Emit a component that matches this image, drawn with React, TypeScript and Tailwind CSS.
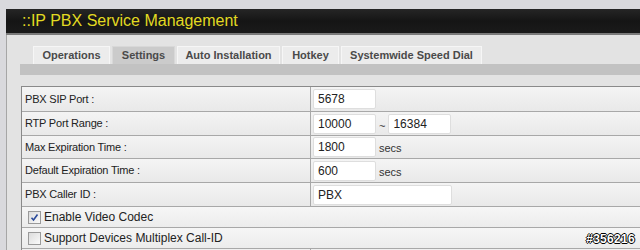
import React from "react"

const tabs = [
  { name: "Operations", w: "w-[77px]" },
  { name: "Settings", w: "w-[63px]", active: true },
  { name: "Auto Installation", w: "w-[103px]" },
  { name: "Hotkey", w: "w-[57px]" },
  { name: "Systemwide Speed Dial", w: "w-[141px]" },
]

function Field({ value, wide }: { value: string; wide?: boolean }) {
  return (
    <div
      className={`h-[20px] ${wide ? "w-[139px]" : "w-[63px]"} bg-white border border-[#dedede] rounded-[2px] px-[4px] flex items-center text-[12px] text-[#222]`}
    >
      {value}
    </div>
  )
}

function Row({ label, h, children }: { label: string; h: string; children: React.ReactNode }) {
  return (
    <div className={`flex ${h} border-b border-[#a8a8a8]`}>
      <div className="w-[289px] shrink-0 border-r border-[#a8a8a8] pl-[3px] flex items-center text-[11px] tracking-[-0.2px] text-[#222] bg-gradient-to-b from-[#f4f4f4] to-[#e9e9e9]">
        {label}
      </div>
      <div className="flex-1 flex items-center pl-[2px] gap-[3px] text-[11px] text-[#333] bg-gradient-to-b from-[#f4f4f4] to-[#e9e9e9]">
        {children}
      </div>
    </div>
  )
}

function CheckRow({ label, checked, h }: { label: string; checked?: boolean; h: string }) {
  return (
    <div className={`flex items-center ${h} border-b border-[#a8a8a8] pl-[6px] gap-[3px] text-[12px] text-[#222] bg-gradient-to-b from-[#f6f6f6] to-[#ececec]`}>
      <div className="w-[13px] h-[13px] border border-[#9a9a9a] bg-gradient-to-br from-[#dcdcdc] to-[#fafafa] flex items-center justify-center">
        {checked && (
          <svg width="9" height="9" viewBox="0 0 9 9">
            <path d="M1.5 4.8 L3.5 7 L7.5 1.5" stroke="#2a4a9a" strokeWidth="1.6" fill="none" />
          </svg>
        )}
      </div>
      <span>{label}</span>
    </div>
  )
}

export default function App() {
  return (
    <div className="w-[640px] h-[250px] overflow-hidden bg-[#d9d9dd] pt-[9px] relative font-['Liberation_Sans',Arial,sans-serif]">
      {/* title bar */}
      <div className="ml-[6px] h-[26px] bg-gradient-to-b from-[#262626] via-[#151515] to-[#1a1a1a] border-b-2 border-[#7a7a7a] flex items-center pl-[16px]">
        <span className="text-[16px] text-[#e2da22] leading-none">::IP PBX Service Management</span>
      </div>

      {/* panel */}
      <div className="ml-[6px] h-[220px] bg-[#e3e3e3] border-l border-[#a6a6a6] pl-[13px]">
        <div className="pt-[11px] pl-[13px] flex gap-[2px]">
          {tabs.map(t => (
            <div
              key={t.name}
              className={`${t.w} h-[18px] flex items-center justify-center text-[11px] font-bold text-[#4a4a4a] border-t border-l border-r ${
                t.active ? "bg-[#cbcbcb] border-[#d8d8d8]" : "bg-[#ececec] border-[#f6f6f6]"
              }`}
            >
              {t.name}
            </div>
          ))}
        </div>
        <div className="h-[11px] bg-[#c2c2c2]" />

        {/* settings table */}
        <div className="mt-[11px] ml-[1px] border-t border-l border-[#8a8a8a]">
          <Row label="PBX SIP Port :" h="h-[25px]">
            <Field value="5678" />
          </Row>
          <Row label="RTP Port Range :" h="h-[24px]">
            <Field value="10000" />
            <span className="text-[11px] leading-none mt-[5px]">~</span>
            <Field value="16384" />
          </Row>
          <Row label="Max Expiration Time :" h="h-[23px]">
            <Field value="1800" />
            <span className="mt-[3px]">secs</span>
          </Row>
          <Row label="Default Expiration Time :" h="h-[24px]">
            <Field value="600" />
            <span className="mt-[3px]">secs</span>
          </Row>
          <Row label="PBX Caller ID :" h="h-[24px]">
            <Field value="PBX" wide />
          </Row>
          <CheckRow label="Enable Video Codec" checked h="h-[21px]" />
          <CheckRow label="Support Devices Multiplex Call-ID" h="h-[21px]" />
          <div className="flex h-[10px]">
            <div className="w-[289px] border-r border-[#a8a8a8] bg-[#efefef]" />
            <div className="flex-1 bg-[#efefef]" />
          </div>
        </div>
      </div>

      {/* watermark */}
      <div className="absolute right-[5px] bottom-[2px] text-[12px] font-bold text-white tracking-[0.3px] [text-shadow:1px_0_0_#000,-1px_0_0_#000,0_1px_0_#000,0_-1px_0_#000]">
        #356216
      </div>
    </div>
  )
}
